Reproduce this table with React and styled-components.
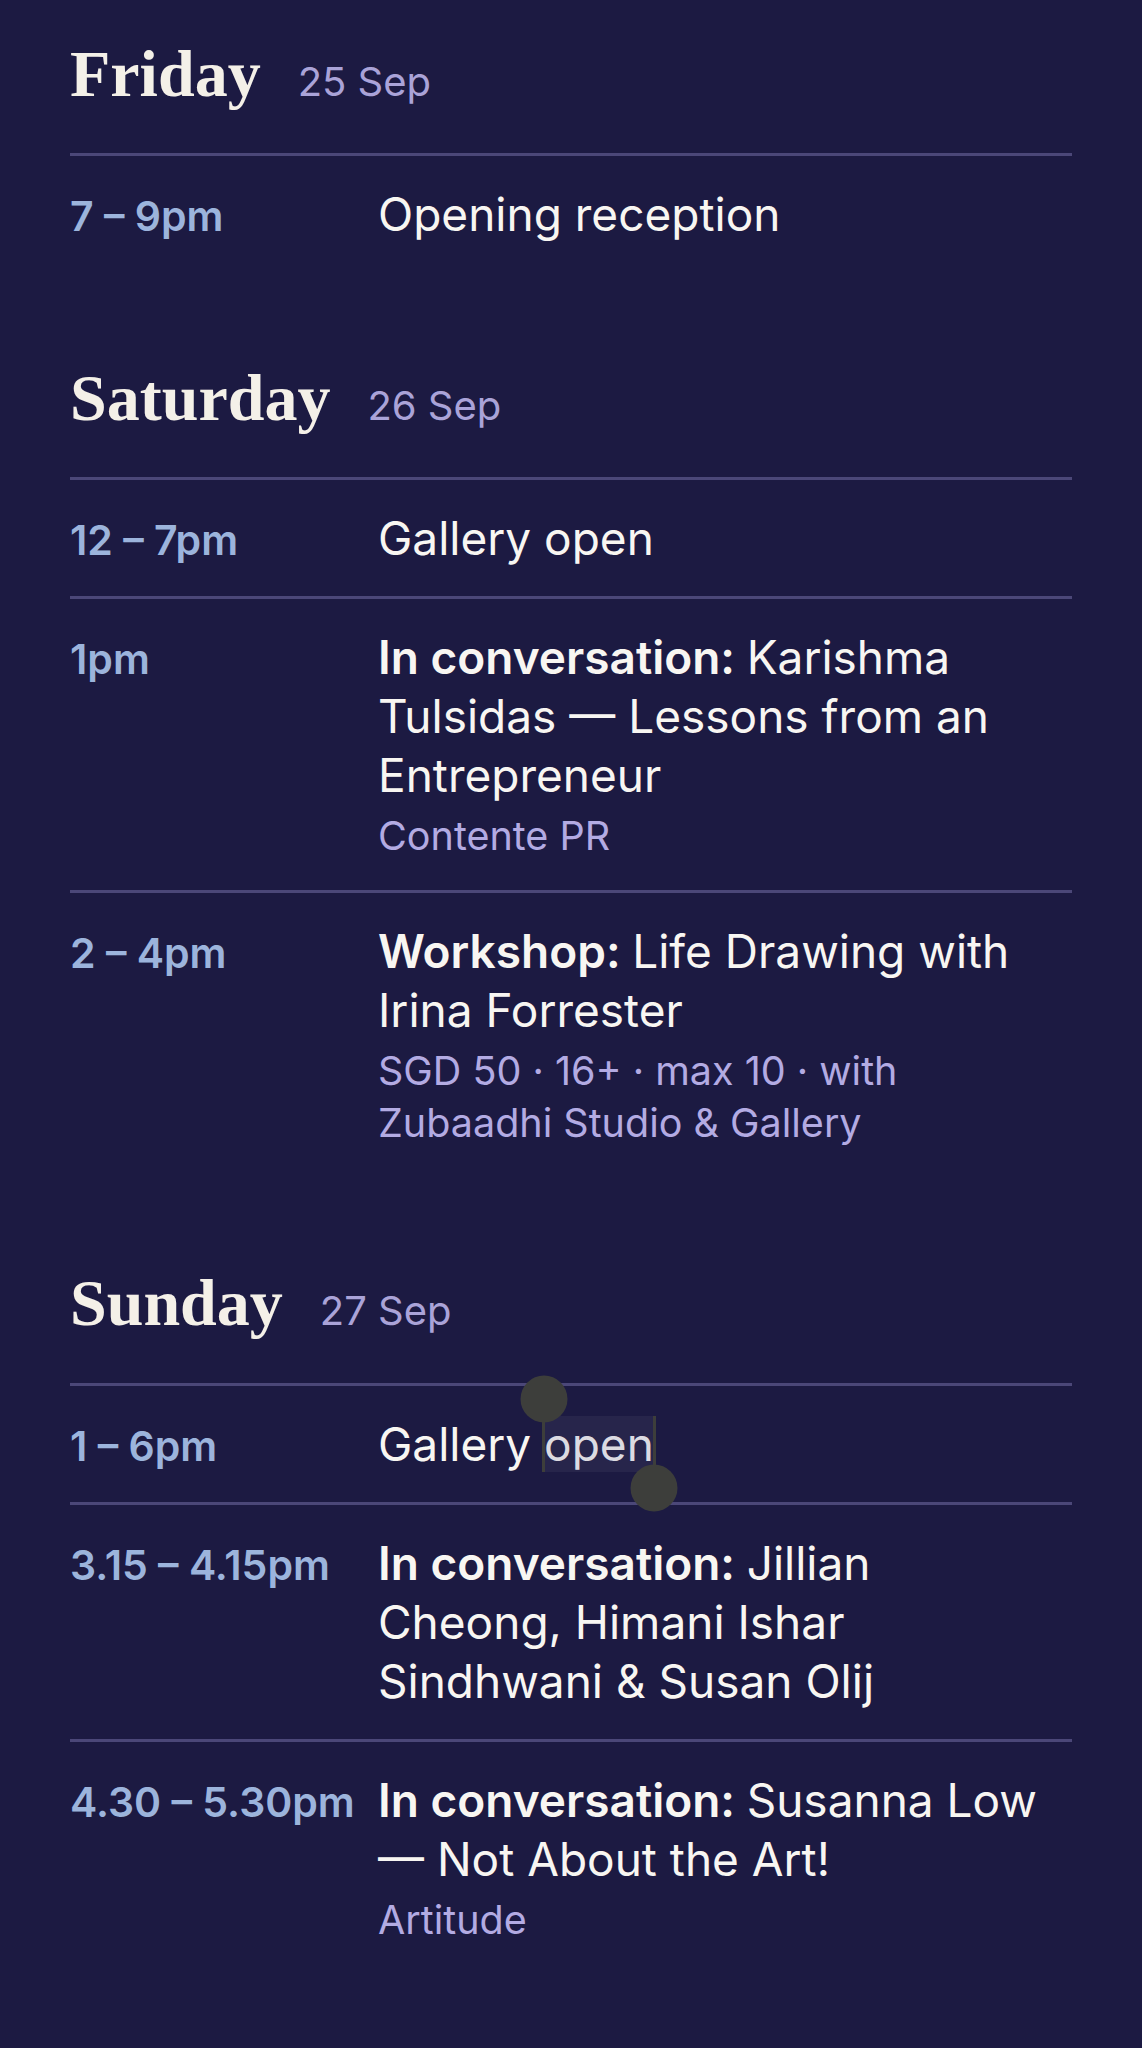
import React from "react";
import styled, { createGlobalStyle } from "styled-components";

const GlobalStyle = createGlobalStyle`
  html, body {
    margin: 0;
    padding: 0;
    background: #1c1a42;
  }
  body {
    font-family: Inter, "Noto Sans", sans-serif;
    -webkit-font-smoothing: antialiased;
  }
`;

const Page = styled.main`
  min-height: 2048px;
  box-sizing: border-box;
  padding: 34px 70px 0;
  background: #1c1a42;
  display: flex;
  flex-direction: column;
  gap: 86px;
`;

const Day = styled.section`
  display: flex;
  flex-direction: column;
`;

const DayHeader = styled.header`
  display: flex;
  align-items: baseline;
  gap: 37px;
  padding-bottom: 40px;
`;

const DayName = styled.h2`
  margin: 0;
  font-family: "Liberation Serif", "Times New Roman", serif;
  font-weight: 700;
  font-size: 66px;
  line-height: 1.2;
  color: #f4f0e8;
`;

const DayDate = styled.span`
  font-family: Inter, sans-serif;
  font-size: 40px;
  font-weight: 400;
  color: #aaa3d8;
`;

const Row = styled.div`
  display: grid;
  grid-template-columns: 284px minmax(0, 1fr);
  column-gap: 24px;
  align-items: first baseline;
  border-top: 3px solid #4b4778;
  padding: 29px 16px 28px 0;
`;

const Time = styled.div`
  font-family: Inter, sans-serif;
  font-size: 41px;
  font-weight: 600;
  color: #9cb4dc;
  white-space: nowrap;
`;

const Info = styled.div`
  display: flex;
  flex-direction: column;
`;

const Title = styled.div`
  font-family: Inter, sans-serif;
  font-size: 46px;
  line-height: 59px;
  color: #f8f6f2;

  b {
    font-weight: 600;
  }
`;

const Sub = styled.div`
  margin-top: 5px;
  font-family: Inter, sans-serif;
  font-size: 39.5px;
  line-height: 52px;
  color: #b3abe3;
`;

const Selected = styled.span`
  position: relative;
  background: rgba(255, 255, 255, 0.05);
  color: #dcdbe2;
`;

const Handle = styled.span`
  position: absolute;
  width: 3px;
  background: #3d3e3b;
  z-index: 2;
  ${(p) =>
    p.$end
      ? `right: -2px; top: 0; bottom: -16px;`
      : `left: -2px; top: -17px; bottom: 0;`}

  &::before {
    content: "";
    position: absolute;
    left: 50%;
    ${(p) => (p.$end ? "bottom: 0;" : "top: 0;")}
    width: 47px;
    height: 47px;
    border-radius: 50%;
    background: #3d3e3b;
    transform: translate(-50%, ${(p) => (p.$end ? "50%" : "-50%")});
  }
`;

const schedule = [
  {
    day: "Friday",
    date: "25 Sep",
    items: [{ time: "7 – 9pm", title: "Opening reception" }],
  },
  {
    day: "Saturday",
    date: "26 Sep",
    items: [
      { time: "12 – 7pm", title: "Gallery open" },
      {
        time: "1pm",
        label: "In conversation:",
        title: "Karishma Tulsidas — Lessons from an Entrepreneur",
        sub: "Contente PR",
      },
      {
        time: "2 – 4pm",
        label: "Workshop:",
        title: "Life Drawing with Irina Forrester",
        sub: "SGD 50 · 16+ · max 10 · with Zubaadhi Studio & Gallery",
      },
    ],
  },
  {
    day: "Sunday",
    date: "27 Sep",
    items: [
      { time: "1 – 6pm", title: "Gallery", selected: "open" },
      {
        time: "3.15 – 4.15pm",
        label: "In conversation:",
        title: "Jillian Cheong, Himani Ishar Sindhwani & Susan Olij",
      },
      {
        time: "4.30 – 5.30pm",
        label: "In conversation:",
        title: "Susanna Low — Not About the Art!",
        sub: "Artitude",
      },
    ],
  },
];

function App() {
  return (
    <>
      <GlobalStyle />
      <Page>
        {schedule.map((d) => (
          <Day key={d.day}>
            <DayHeader>
              <DayName>{d.day}</DayName>
              <DayDate>{d.date}</DayDate>
            </DayHeader>
            {d.items.map((item) => (
              <Row key={item.time}>
                <Time>{item.time}</Time>
                <Info>
                  <Title>
                    {item.label && <b>{item.label} </b>}
                    {item.title}
                    {item.selected && (
                      <>
                        {" "}
                        <Selected>
                          <Handle />
                          {item.selected}
                          <Handle $end />
                        </Selected>
                      </>
                    )}
                  </Title>
                  {item.sub && <Sub>{item.sub}</Sub>}
                </Info>
              </Row>
            ))}
          </Day>
        ))}
      </Page>
    </>
  );
}

export default App;
